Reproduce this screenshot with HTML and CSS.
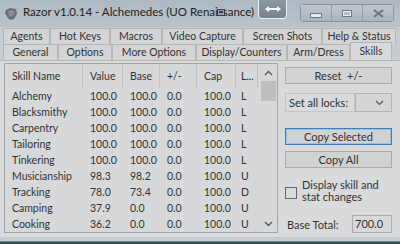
FILE: index.html
```html
<!DOCTYPE html>
<html>
<head>
<meta charset="UTF-8">
<title>Razor</title>
<link rel="stylesheet" href="styles.css">
</head>
<body>
<div class="window">
	<div class="titlebar">
		<svg class="appicon" width="14" height="14" viewBox="0 0 14 14">
			<path d="M2 3 L6 1 L12 2 L13 7 L10 12 L6 13 L3 10 L1 6 Z" fill="#6c7076"/>
			<path d="M4 4 L8 3 L11 5 L9 9 L5 10 Z" fill="#8a8f95"/>
		</svg>
		<span class="title">Razor v1.0.14 - Alchemedes (UO Renaissance)</span>
		<svg class="tinyicon" width="8" height="8" viewBox="0 0 8 8">
			<rect x="0.5" y="0.5" width="7" height="6" fill="#9aa3aa" stroke="#3a3f44"/>
			<rect x="2" y="2" width="4" height="2" fill="#3a3f44"/>
		</svg>
		<div class="overlay">
			<svg width="18" height="8" viewBox="0 0 18 8">
				<path d="M1 4 L5 1 L5 3 L13 3 L13 1 L17 4 L13 7 L13 5 L5 5 L5 7 Z" fill="#fff"/>
			</svg>
		</div>
		<div class="caption">
			<div class="cbtn"><span class="min"></span></div>
			<div class="cbtn"><span class="max"></span></div>
			<div class="cbtn close">
				<svg width="11" height="9" viewBox="0 0 11 9">
					<path d="M1 1 L10 8 M10 1 L1 8" stroke="#6f7880" stroke-width="2.2"/>
				</svg>
			</div>
		</div>
	</div>

	<div class="tabs">
		<div class="tabrow">
			<div class="tab w-agents">Agents</div>
			<div class="tab w-hotkeys">Hot Keys</div>
			<div class="tab w-macros">Macros</div>
			<div class="tab w-video">Video Capture</div>
			<div class="tab w-shots">Screen Shots</div>
			<div class="tab w-help">Help &amp; Status</div>
		</div>
		<div class="tabrow">
			<div class="tab w-general">General</div>
			<div class="tab w-options">Options</div>
			<div class="tab w-more">More Options</div>
			<div class="tab w-display">Display/Counters</div>
			<div class="tab w-arm">Arm/Dress</div>
			<div class="tab w-skills active">Skills</div>
		</div>
	</div>

	<div class="page">
		<div class="list">
			<div class="grid">
				<div class="row head">
					<span class="c1">Skill Name</span><span class="c2">Value</span><span class="c3">Base</span><span class="c4">+/-</span><span class="c5">Cap</span><span class="c6">L...</span>
				</div>
				<div class="row"><span class="c1">Alchemy</span><span class="c2">100.0</span><span class="c3">100.0</span><span class="c4">0.0</span><span class="c5">100.0</span><span class="c6">L</span></div>
				<div class="row"><span class="c1">Blacksmithy</span><span class="c2">100.0</span><span class="c3">100.0</span><span class="c4">0.0</span><span class="c5">100.0</span><span class="c6">L</span></div>
				<div class="row"><span class="c1">Carpentry</span><span class="c2">100.0</span><span class="c3">100.0</span><span class="c4">0.0</span><span class="c5">100.0</span><span class="c6">L</span></div>
				<div class="row"><span class="c1">Tailoring</span><span class="c2">100.0</span><span class="c3">100.0</span><span class="c4">0.0</span><span class="c5">100.0</span><span class="c6">L</span></div>
				<div class="row"><span class="c1">Tinkering</span><span class="c2">100.0</span><span class="c3">100.0</span><span class="c4">0.0</span><span class="c5">100.0</span><span class="c6">L</span></div>
				<div class="row"><span class="c1">Musicianship</span><span class="c2">98.3</span><span class="c3">98.2</span><span class="c4">0.0</span><span class="c5">100.0</span><span class="c6">U</span></div>
				<div class="row"><span class="c1">Tracking</span><span class="c2">78.0</span><span class="c3">73.4</span><span class="c4">0.0</span><span class="c5">100.0</span><span class="c6">D</span></div>
				<div class="row"><span class="c1">Camping</span><span class="c2">37.9</span><span class="c3">0.0</span><span class="c4">0.0</span><span class="c5">100.0</span><span class="c6">U</span></div>
				<div class="row"><span class="c1">Cooking</span><span class="c2">36.2</span><span class="c3">0.0</span><span class="c4">0.0</span><span class="c5">100.0</span><span class="c6">U</span></div>
			</div>
			<div class="scroll">
				<div class="arrow">
					<svg width="9" height="6" viewBox="0 0 9 6"><path d="M1 5 L4.5 1.5 L8 5" stroke="#555" stroke-width="1.3" fill="none"/></svg>
				</div>
				<div class="thumb"></div>
				<div class="track"></div>
				<div class="arrow">
					<svg width="9" height="6" viewBox="0 0 9 6"><path d="M1 1 L4.5 4.5 L8 1" stroke="#555" stroke-width="1.3" fill="none"/></svg>
				</div>
			</div>
		</div>

		<div class="side">
			<div class="btn">Reset&nbsp; +/-</div>
			<div class="locks">
				<div class="lbl">Set all locks:</div>
				<div class="combo">
					<svg width="9" height="6" viewBox="0 0 9 6"><path d="M1 1 L4.5 4.5 L8 1" stroke="#555" stroke-width="1.2" fill="none"/></svg>
				</div>
			</div>
			<div class="btn focus">Copy Selected</div>
			<div class="btn">Copy All</div>
			<div class="check">
				<div class="box"></div>
				<div class="ctext">Display skill and stat changes</div>
			</div>
			<div class="total">
				<span>Base Total:</span>
				<div class="tbox">700.0</div>
			</div>
		</div>
	</div>
	<div class="bottom"></div>
</div>
</body>
</html>
```

FILE: styles.css
```css
body{
	margin: 0;
	background: #1f3a3e;
}

.window{
	width: 400px;
	height: 244px;
	background: #c9cccf;
	font-family: Lato, "Liberation Sans", sans-serif;
	font-size: 10.5px;
	color: #333;
	overflow: hidden;
	display: flex;
	flex-direction: column;
	position: relative;
}

.titlebar{
	height: 27px;
	display: flex;
	align-items: flex-start;
	background: linear-gradient(#aeb9c2, #bac3ca);
	position: relative;
	flex-shrink: 0;
}

.appicon{
	margin: 7px 0 0 4px;
}

.title{
	margin: 5px 0 0 5px;
	font-size: 11.5px;
	color: #222;
}

.tinyicon{
	position: absolute;
	left: 217px;
	top: 9px;
}

.overlay{
	position: absolute;
	left: 258px;
	top: -2px;
	width: 27px;
	height: 19px;
	border: 1px solid #eef2f5;
	border-radius: 0 0 4px 4px;
	background: linear-gradient(#8d99a3, #76838e);
	display: flex;
	align-items: center;
	justify-content: center;
}

.caption{
	margin: 4px 6px 0 auto;
	display: flex;
	border: 1px solid #8a959e;
	border-radius: 3px;
}

.cbtn{
	width: 30px;
	height: 16px;
	background: linear-gradient(#c0c8ce, #a9b3bb);
	border-left: 1px solid #929ca4;
	display: flex;
	align-items: center;
	justify-content: center;
}

.cbtn:first-child{
	border-left: none;
}

.min{
	width: 10px;
	height: 3px;
	background: #e8ecef;
	border: 1px solid #6f7880;
	margin-top: 4px;
}

.max{
	width: 8px;
	height: 5px;
	border: 1px solid #6f7880;
	background: #b5bec5;
	box-shadow: inset 0 0 0 1px #e8ecef;
}

.tabs{
	background: #c9cccf;
	padding: 1px 0 0 3px;
	flex-shrink: 0;
}

.tabrow{
	display: flex;
	height: 16px;
}

.tab{
	box-sizing: border-box;
	border: 1px solid #b4b6b8;
	border-bottom: none;
	background: #d3d4d6;
	text-align: center;
	line-height: 15px;
	white-space: nowrap;
}

.tab.active{
	background: #d9dadb;
	height: 18px;
	margin-top: -2px;
	line-height: 17px;
	position: relative;
	z-index: 1;
}

.w-agents{ width: 47px; }
.w-hotkeys{ width: 60px; }
.w-macros{ width: 52px; }
.w-video{ width: 81px; }
.w-shots{ width: 79px; }
.w-help{ width: 74px; }
.w-general{ width: 55px; }
.w-options{ width: 54px; }
.w-more{ width: 84px; }
.w-display{ width: 91px; }
.w-arm{ width: 63px; }
.w-skills{ width: 42px; }

.page{
	flex: 1;
	display: flex;
	gap: 7px;
	padding: 2px 8px 4px 4px;
	background: #d9dadb;
	border-top: 1px solid #b4b6b8;
}

.list{
	width: 272px;
	border: 1px solid #a2a4a6;
	background: #d7d8d9;
	display: flex;
}

.grid{
	flex: 1;
}

.row{
	display: flex;
	height: 16px;
	line-height: 16px;
	white-space: nowrap;
}

.row.head{
	height: 24px;
	line-height: 24px;
}

.row.head span{
	border-right: 1px solid #c2c3c5;
}

.row span{
	box-sizing: border-box;
	padding-left: 7px;
}

.c1{ width: 78px; }
.c2{ width: 40px; }
.c3{ width: 37px; }
.c4{ width: 37px; }
.c5{ width: 39px; }
.c6{ width: 22px; padding-left: 5px !important; }

.scroll{
	width: 17px;
	display: flex;
	flex-direction: column;
	align-items: center;
	background: #d7d8d9;
}

.arrow{
	height: 17px;
	display: flex;
	align-items: center;
	justify-content: center;
}

.thumb{
	width: 15px;
	height: 20px;
	background: #bdbebf;
}

.track{
	flex: 1;
}

.side{
	flex: 1;
	display: flex;
	flex-direction: column;
	padding-top: 4px;
}

.btn{
	height: 17px;
	box-sizing: border-box;
	border: 1px solid #a9abad;
	background: #d1d2d3;
	text-align: center;
	line-height: 15px;
	font-size: 11px;
}

.btn.focus{
	border-color: #3f7fb8;
	box-shadow: inset 0 0 0 1px #9cc1e0;
	margin-top: 16px;
}

.btn.focus + .btn{
	margin-top: 6px;
}

.locks{
	display: flex;
	margin-top: 9px;
	height: 19px;
}

.lbl{
	width: 70px;
	box-sizing: border-box;
	border: 1px solid #c4c5c7;
	line-height: 17px;
	padding-left: 3px;
	font-size: 11px;
	white-space: nowrap;
}

.combo{
	flex: 1;
	border: 1px solid #b2b4b6;
	background: #d4d5d6;
	display: flex;
	align-items: center;
	justify-content: flex-end;
	padding-right: 7px;
}

.check{
	display: flex;
	align-items: center;
	margin-top: 11px;
	gap: 5px;
}

.box{
	width: 10px;
	height: 10px;
	border: 1px solid #666;
	background: #d9dadb;
	margin-top: 4px;
	flex-shrink: 0;
}

.ctext{
	line-height: 12px;
	font-size: 11px;
}

.total{
	display: flex;
	align-items: center;
	margin-top: auto;
	justify-content: space-between;
	font-size: 11px;
	padding-left: 2px;
}

.tbox{
	width: 40px;
	height: 18px;
	box-sizing: border-box;
	border: 1px solid #a9abad;
	background: #d7d8d9;
	line-height: 16px;
	padding-left: 2px;
}

.bottom{
	height: 8px;
	background: linear-gradient(#c9cccf 0, #c9cccf 4px, #2d4b50 5px);
	flex-shrink: 0;
}
```
